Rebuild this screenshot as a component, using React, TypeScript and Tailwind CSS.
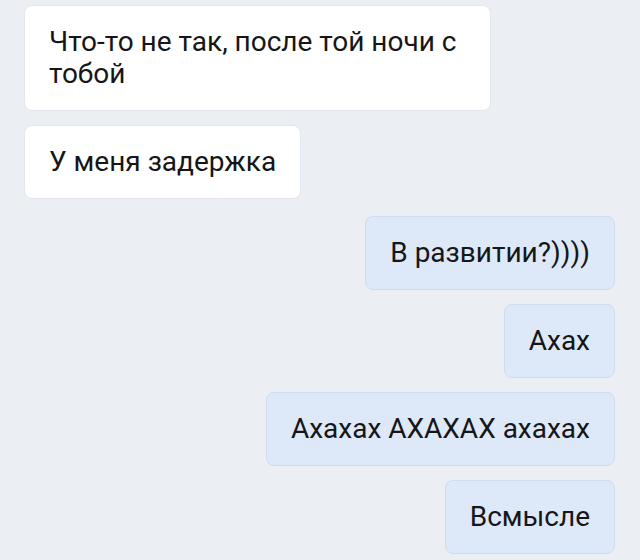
function Bubble({ children, mine, className = '' }: { children: React.ReactNode; mine?: boolean; className?: string }) {
  return (
    <div
      className={
        'rounded-lg border px-6 py-[20px] text-[28px] leading-[32px] text-[#161616] whitespace-nowrap ' +
        (mine ? 'bg-[#dde8f8] border-[#d0dcee] self-end' : 'bg-white border-[#e3e7ee] self-start') +
        ' ' + className
      }
    >
      {children}
    </div>
  );
}

export default function App() {
  return (
    <div
      className="w-[640px] h-[560px] overflow-hidden bg-[#ebeef3] flex flex-col gap-[14px] pl-[24px] pr-[25px] pt-[5px]"
      style={{ fontFamily: 'Roboto, "Liberation Sans", sans-serif' }}
    >
      <Bubble className="w-[467px]">
        Что-то не так, после той ночи с<br />тобой
      </Bubble>
      <Bubble>У меня задержка</Bubble>
      <Bubble mine className="mt-[3px]">В развитии?))))</Bubble>
      <Bubble mine>Ахах</Bubble>
      <Bubble mine>Ахахах АХАХАХ ахахах</Bubble>
      <Bubble mine>Всмысле</Bubble>
    </div>
  );
}
